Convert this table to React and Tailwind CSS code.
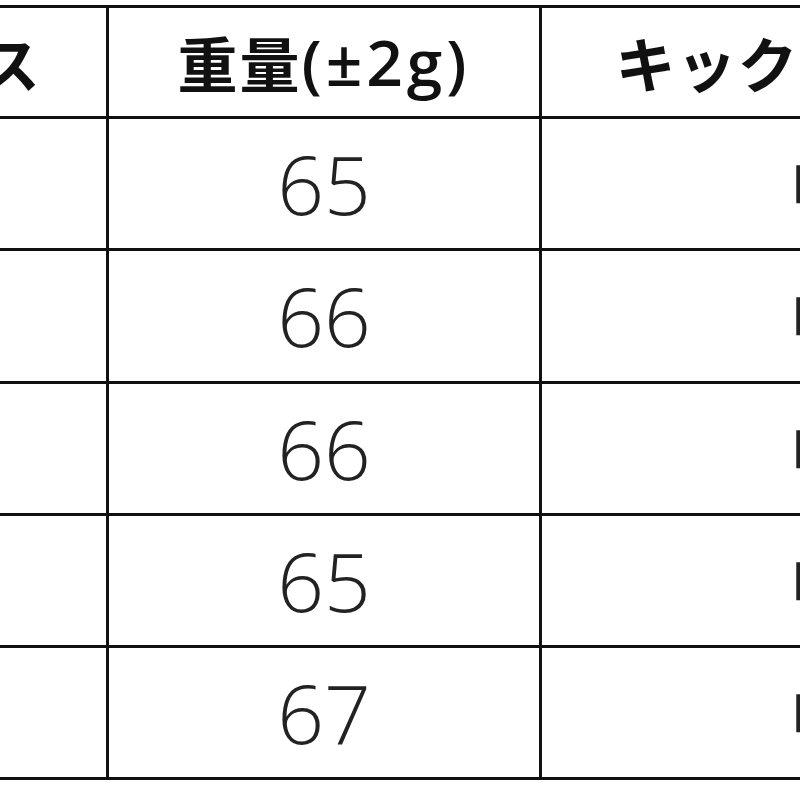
const rows = [
  { flex: "R", weight: "65", kick: "中" },
  { flex: "SR", weight: "66", kick: "中" },
  { flex: "S", weight: "66", kick: "中" },
  { flex: "X", weight: "65", kick: "中" },
  { flex: "TX", weight: "67", kick: "中" },
];

const headCell =
  "bg-white flex items-center justify-center h-[108px] text-[60px] font-bold text-[#111] whitespace-nowrap";
const bodyCell =
  "bg-white flex items-center justify-center h-[129.3px] text-[82px] font-light text-[#222] whitespace-nowrap";

export default function App() {
  return (
    <div className="w-[800px] h-[800px] overflow-hidden bg-white font-['Noto_Sans_CJK_JP',sans-serif]">
      {/* spec table, cropped */}
      <div className="ml-[-327px] mt-[5px] w-max grid grid-cols-[430px_430px_574px] gap-[3px] p-[3px] bg-[#111]">
        <div className={headCell}>フレックス</div>
        <div className={headCell}>
          <span className="tracking-[2px]">重量</span>
          <span className="font-['Open_Sans',sans-serif] font-semibold text-[64px] tracking-[4px]">(±2g)</span>
        </div>
        <div className={headCell + " text-[56px] tracking-[1px]"}>キックポイント</div>

        {rows.map((r, i) => (
          <>
            <div key={"f" + i} className={bodyCell + " font-['Open_Sans',sans-serif]"}>
              {r.flex}
            </div>
            <div key={"w" + i} className={bodyCell + " font-['Open_Sans',sans-serif]"}>
              {r.weight}
            </div>
            <div key={"k" + i} className={bodyCell + " text-[60px] font-bold"}>
              {r.kick}
            </div>
          </>
        ))}
      </div>
    </div>
  );
}
